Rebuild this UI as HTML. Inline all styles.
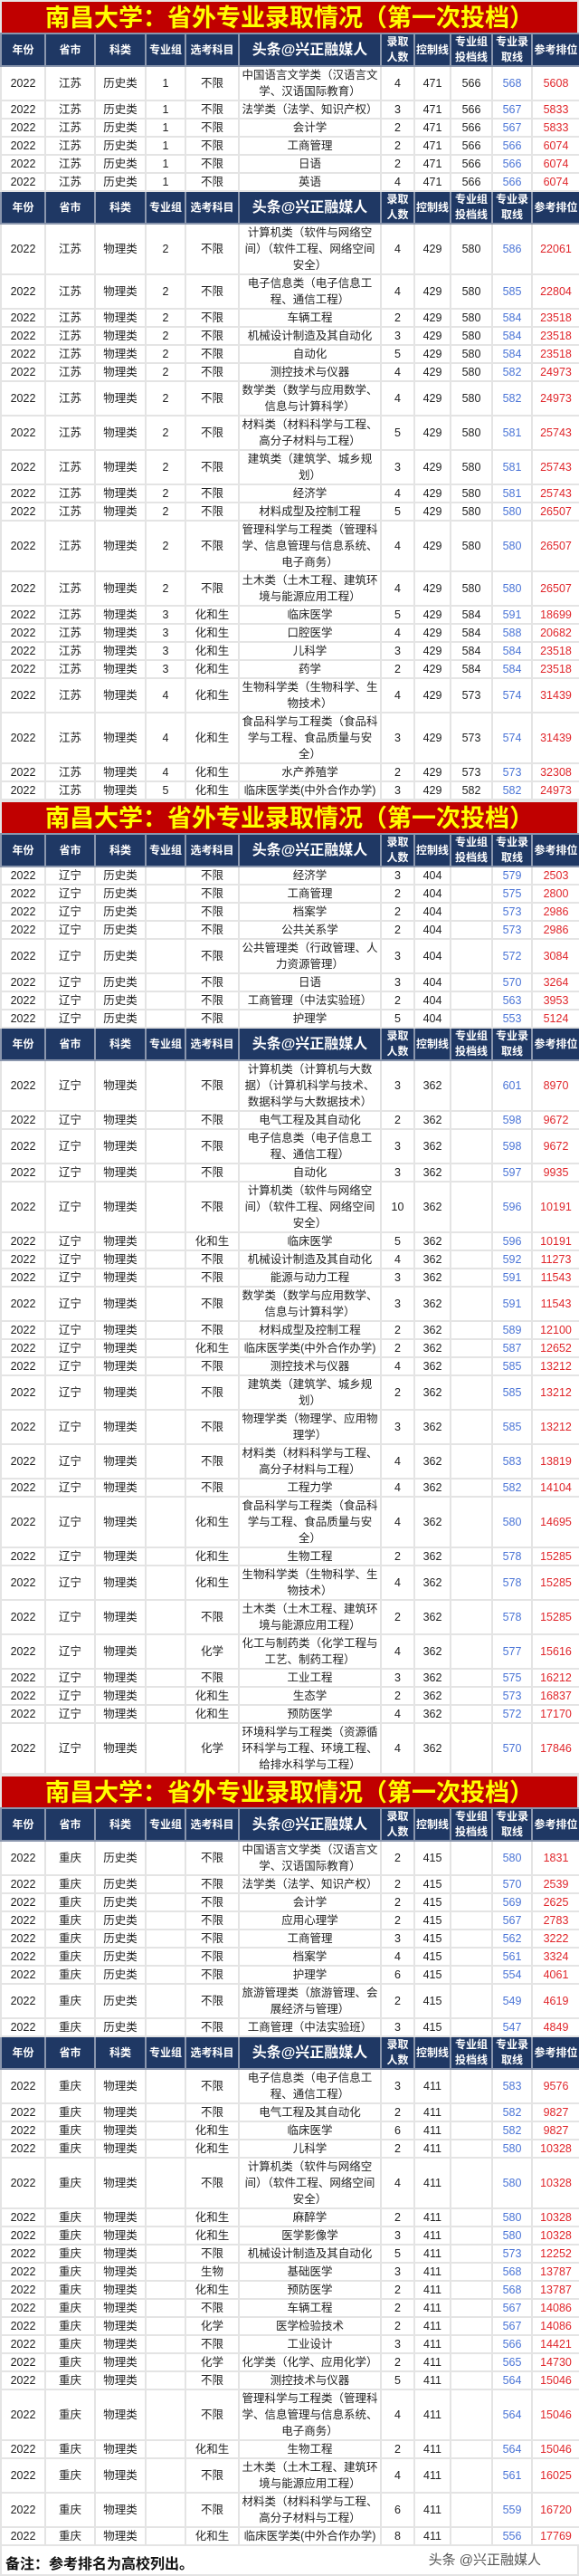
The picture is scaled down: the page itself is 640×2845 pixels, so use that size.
<!DOCTYPE html>
<html><head><meta charset="utf-8">
<style>
*{margin:0;padding:0;box-sizing:border-box}
body{width:640px;height:2811px;background:#fff;font-family:"Liberation Sans","Noto Sans CJK SC",sans-serif;color:#222;overflow:hidden}
.title{height:36px;background:#c00000;color:#ffff00;font-weight:bold;font-size:27px;line-height:36px;text-align:center;border:2px solid #e6e6e6;border-bottom:none;letter-spacing:0px}
table{width:640px;border-collapse:collapse;table-layout:fixed}
td{border:2px solid #e4e4e4;text-align:center;vertical-align:middle;font-size:12.5px;line-height:18px;padding:0 1px;overflow:hidden;white-space:normal}
tr.h td{background:#1f3864;color:#fff;font-weight:bold;font-size:12px;line-height:17px;border:2px solid #8a96ad;height:35px}
tr.h td.w{font-size:16px}
tr.a td{height:19.7px}
tr.b td{height:37.3px}
tr.c td{height:55px}
td.n{color:#4a74d6}
td.r{color:#e0262b}
td.k{font-size:12.5px}
.foot{height:33px;position:relative;border:2px solid #e4e4e4;border-top:none}
.foot .l{position:absolute;left:4px;top:6px;font-weight:bold;font-size:16px;color:#111}
.foot .m{position:absolute;right:40px;top:4px;font-size:15px;color:#555}
</style></head><body>

<div class="title">南昌大学：省外专业录取情况（第一次投档）</div>
<table>
<colgroup><col style="width:49px"><col style="width:55px"><col style="width:56px"><col style="width:44px"><col style="width:59px"><col style="width:157px"><col style="width:37px"><col style="width:40px"><col style="width:46px"><col style="width:44px"><col style="width:53px"></colgroup>
<tr class="h"><td>年份</td><td>省市</td><td>科类</td><td>专业组</td><td>选考科目</td><td class="w">头条@兴正融媒人</td><td>录取人数</td><td>控制线</td><td>专业组投档线</td><td>专业录取线</td><td>参考排位</td></tr>
<tr class="b"><td>2022</td><td>江苏</td><td>历史类</td><td>1</td><td>不限</td><td>中国语言文学类（汉语言文学、汉语国际教育）</td><td>4</td><td>471</td><td>566</td><td class="n">568</td><td class="r">5608</td></tr>
<tr class="a"><td>2022</td><td>江苏</td><td>历史类</td><td>1</td><td>不限</td><td>法学类（法学、知识产权）</td><td>3</td><td>471</td><td>566</td><td class="n">567</td><td class="r">5833</td></tr>
<tr class="a"><td>2022</td><td>江苏</td><td>历史类</td><td>1</td><td>不限</td><td>会计学</td><td>2</td><td>471</td><td>566</td><td class="n">567</td><td class="r">5833</td></tr>
<tr class="a"><td>2022</td><td>江苏</td><td>历史类</td><td>1</td><td>不限</td><td>工商管理</td><td>2</td><td>471</td><td>566</td><td class="n">566</td><td class="r">6074</td></tr>
<tr class="a"><td>2022</td><td>江苏</td><td>历史类</td><td>1</td><td>不限</td><td>日语</td><td>2</td><td>471</td><td>566</td><td class="n">566</td><td class="r">6074</td></tr>
<tr class="a"><td>2022</td><td>江苏</td><td>历史类</td><td>1</td><td>不限</td><td>英语</td><td>4</td><td>471</td><td>566</td><td class="n">566</td><td class="r">6074</td></tr>
<tr class="h"><td>年份</td><td>省市</td><td>科类</td><td>专业组</td><td>选考科目</td><td class="w">头条@兴正融媒人</td><td>录取人数</td><td>控制线</td><td>专业组投档线</td><td>专业录取线</td><td>参考排位</td></tr>
<tr class="c"><td>2022</td><td>江苏</td><td>物理类</td><td>2</td><td>不限</td><td>计算机类（软件与网络空间）（软件工程、网络空间安全）</td><td>4</td><td>429</td><td>580</td><td class="n">586</td><td class="r">22061</td></tr>
<tr class="b"><td>2022</td><td>江苏</td><td>物理类</td><td>2</td><td>不限</td><td>电子信息类（电子信息工程、通信工程）</td><td>4</td><td>429</td><td>580</td><td class="n">585</td><td class="r">22804</td></tr>
<tr class="a"><td>2022</td><td>江苏</td><td>物理类</td><td>2</td><td>不限</td><td>车辆工程</td><td>2</td><td>429</td><td>580</td><td class="n">584</td><td class="r">23518</td></tr>
<tr class="a"><td>2022</td><td>江苏</td><td>物理类</td><td>2</td><td>不限</td><td>机械设计制造及其自动化</td><td>3</td><td>429</td><td>580</td><td class="n">584</td><td class="r">23518</td></tr>
<tr class="a"><td>2022</td><td>江苏</td><td>物理类</td><td>2</td><td>不限</td><td>自动化</td><td>5</td><td>429</td><td>580</td><td class="n">584</td><td class="r">23518</td></tr>
<tr class="a"><td>2022</td><td>江苏</td><td>物理类</td><td>2</td><td>不限</td><td>测控技术与仪器</td><td>4</td><td>429</td><td>580</td><td class="n">582</td><td class="r">24973</td></tr>
<tr class="b"><td>2022</td><td>江苏</td><td>物理类</td><td>2</td><td>不限</td><td>数学类（数学与应用数学、信息与计算科学）</td><td>4</td><td>429</td><td>580</td><td class="n">582</td><td class="r">24973</td></tr>
<tr class="b"><td>2022</td><td>江苏</td><td>物理类</td><td>2</td><td>不限</td><td>材料类（材料科学与工程、高分子材料与工程）</td><td>5</td><td>429</td><td>580</td><td class="n">581</td><td class="r">25743</td></tr>
<tr class="b"><td>2022</td><td>江苏</td><td>物理类</td><td>2</td><td>不限</td><td>建筑类（建筑学、城乡规划）</td><td>3</td><td>429</td><td>580</td><td class="n">581</td><td class="r">25743</td></tr>
<tr class="a"><td>2022</td><td>江苏</td><td>物理类</td><td>2</td><td>不限</td><td>经济学</td><td>4</td><td>429</td><td>580</td><td class="n">581</td><td class="r">25743</td></tr>
<tr class="a"><td>2022</td><td>江苏</td><td>物理类</td><td>2</td><td>不限</td><td>材料成型及控制工程</td><td>5</td><td>429</td><td>580</td><td class="n">580</td><td class="r">26507</td></tr>
<tr class="c"><td>2022</td><td>江苏</td><td>物理类</td><td>2</td><td>不限</td><td>管理科学与工程类（管理科学、信息管理与信息系统、电子商务）</td><td>4</td><td>429</td><td>580</td><td class="n">580</td><td class="r">26507</td></tr>
<tr class="b"><td>2022</td><td>江苏</td><td>物理类</td><td>2</td><td>不限</td><td>土木类（土木工程、建筑环境与能源应用工程）</td><td>4</td><td>429</td><td>580</td><td class="n">580</td><td class="r">26507</td></tr>
<tr class="a"><td>2022</td><td>江苏</td><td>物理类</td><td>3</td><td>化和生</td><td>临床医学</td><td>5</td><td>429</td><td>584</td><td class="n">591</td><td class="r">18699</td></tr>
<tr class="a"><td>2022</td><td>江苏</td><td>物理类</td><td>3</td><td>化和生</td><td>口腔医学</td><td>4</td><td>429</td><td>584</td><td class="n">588</td><td class="r">20682</td></tr>
<tr class="a"><td>2022</td><td>江苏</td><td>物理类</td><td>3</td><td>化和生</td><td>儿科学</td><td>3</td><td>429</td><td>584</td><td class="n">584</td><td class="r">23518</td></tr>
<tr class="a"><td>2022</td><td>江苏</td><td>物理类</td><td>3</td><td>化和生</td><td>药学</td><td>2</td><td>429</td><td>584</td><td class="n">584</td><td class="r">23518</td></tr>
<tr class="b"><td>2022</td><td>江苏</td><td>物理类</td><td>4</td><td>化和生</td><td>生物科学类（生物科学、生物技术）</td><td>4</td><td>429</td><td>573</td><td class="n">574</td><td class="r">31439</td></tr>
<tr class="c"><td>2022</td><td>江苏</td><td>物理类</td><td>4</td><td>化和生</td><td>食品科学与工程类（食品科学与工程、食品质量与安全）</td><td>3</td><td>429</td><td>573</td><td class="n">574</td><td class="r">31439</td></tr>
<tr class="a"><td>2022</td><td>江苏</td><td>物理类</td><td>4</td><td>化和生</td><td>水产养殖学</td><td>2</td><td>429</td><td>573</td><td class="n">573</td><td class="r">32308</td></tr>
<tr class="a"><td>2022</td><td>江苏</td><td>物理类</td><td>5</td><td>化和生</td><td>临床医学类(中外合作办学)</td><td>3</td><td>429</td><td>582</td><td class="n">582</td><td class="r">24973</td></tr>
</table>

<div class="title">南昌大学：省外专业录取情况（第一次投档）</div>
<table>
<colgroup><col style="width:49px"><col style="width:55px"><col style="width:56px"><col style="width:44px"><col style="width:59px"><col style="width:157px"><col style="width:37px"><col style="width:40px"><col style="width:46px"><col style="width:44px"><col style="width:53px"></colgroup>
<tr class="h"><td>年份</td><td>省市</td><td>科类</td><td>专业组</td><td>选考科目</td><td class="w">头条@兴正融媒人</td><td>录取人数</td><td>控制线</td><td>专业组投档线</td><td>专业录取线</td><td>参考排位</td></tr>
<tr class="a"><td>2022</td><td>辽宁</td><td>历史类</td><td></td><td>不限</td><td>经济学</td><td>3</td><td>404</td><td></td><td class="n">579</td><td class="r">2503</td></tr>
<tr class="a"><td>2022</td><td>辽宁</td><td>历史类</td><td></td><td>不限</td><td>工商管理</td><td>2</td><td>404</td><td></td><td class="n">575</td><td class="r">2800</td></tr>
<tr class="a"><td>2022</td><td>辽宁</td><td>历史类</td><td></td><td>不限</td><td>档案学</td><td>2</td><td>404</td><td></td><td class="n">573</td><td class="r">2986</td></tr>
<tr class="a"><td>2022</td><td>辽宁</td><td>历史类</td><td></td><td>不限</td><td>公共关系学</td><td>2</td><td>404</td><td></td><td class="n">573</td><td class="r">2986</td></tr>
<tr class="b"><td>2022</td><td>辽宁</td><td>历史类</td><td></td><td>不限</td><td>公共管理类（行政管理、人力资源管理）</td><td>3</td><td>404</td><td></td><td class="n">572</td><td class="r">3084</td></tr>
<tr class="a"><td>2022</td><td>辽宁</td><td>历史类</td><td></td><td>不限</td><td>日语</td><td>3</td><td>404</td><td></td><td class="n">570</td><td class="r">3264</td></tr>
<tr class="a"><td>2022</td><td>辽宁</td><td>历史类</td><td></td><td>不限</td><td>工商管理（中法实验班）</td><td>2</td><td>404</td><td></td><td class="n">563</td><td class="r">3953</td></tr>
<tr class="a"><td>2022</td><td>辽宁</td><td>历史类</td><td></td><td>不限</td><td>护理学</td><td>5</td><td>404</td><td></td><td class="n">553</td><td class="r">5124</td></tr>
<tr class="h"><td>年份</td><td>省市</td><td>科类</td><td>专业组</td><td>选考科目</td><td class="w">头条@兴正融媒人</td><td>录取人数</td><td>控制线</td><td>专业组投档线</td><td>专业录取线</td><td>参考排位</td></tr>
<tr class="c"><td>2022</td><td>辽宁</td><td>物理类</td><td></td><td>不限</td><td>计算机类（计算机与大数据）（计算机科学与技术、数据科学与大数据技术）</td><td>3</td><td>362</td><td></td><td class="n">601</td><td class="r">8970</td></tr>
<tr class="a"><td>2022</td><td>辽宁</td><td>物理类</td><td></td><td>不限</td><td>电气工程及其自动化</td><td>2</td><td>362</td><td></td><td class="n">598</td><td class="r">9672</td></tr>
<tr class="b"><td>2022</td><td>辽宁</td><td>物理类</td><td></td><td>不限</td><td>电子信息类（电子信息工程、通信工程）</td><td>3</td><td>362</td><td></td><td class="n">598</td><td class="r">9672</td></tr>
<tr class="a"><td>2022</td><td>辽宁</td><td>物理类</td><td></td><td>不限</td><td>自动化</td><td>3</td><td>362</td><td></td><td class="n">597</td><td class="r">9935</td></tr>
<tr class="c"><td>2022</td><td>辽宁</td><td>物理类</td><td></td><td>不限</td><td>计算机类（软件与网络空间）（软件工程、网络空间安全）</td><td>10</td><td>362</td><td></td><td class="n">596</td><td class="r">10191</td></tr>
<tr class="a"><td>2022</td><td>辽宁</td><td>物理类</td><td></td><td>化和生</td><td>临床医学</td><td>5</td><td>362</td><td></td><td class="n">596</td><td class="r">10191</td></tr>
<tr class="a"><td>2022</td><td>辽宁</td><td>物理类</td><td></td><td>不限</td><td>机械设计制造及其自动化</td><td>4</td><td>362</td><td></td><td class="n">592</td><td class="r">11273</td></tr>
<tr class="a"><td>2022</td><td>辽宁</td><td>物理类</td><td></td><td>不限</td><td>能源与动力工程</td><td>3</td><td>362</td><td></td><td class="n">591</td><td class="r">11543</td></tr>
<tr class="b"><td>2022</td><td>辽宁</td><td>物理类</td><td></td><td>不限</td><td>数学类（数学与应用数学、信息与计算科学）</td><td>3</td><td>362</td><td></td><td class="n">591</td><td class="r">11543</td></tr>
<tr class="a"><td>2022</td><td>辽宁</td><td>物理类</td><td></td><td>不限</td><td>材料成型及控制工程</td><td>2</td><td>362</td><td></td><td class="n">589</td><td class="r">12100</td></tr>
<tr class="a"><td>2022</td><td>辽宁</td><td>物理类</td><td></td><td>化和生</td><td>临床医学类(中外合作办学)</td><td>2</td><td>362</td><td></td><td class="n">587</td><td class="r">12652</td></tr>
<tr class="a"><td>2022</td><td>辽宁</td><td>物理类</td><td></td><td>不限</td><td>测控技术与仪器</td><td>4</td><td>362</td><td></td><td class="n">585</td><td class="r">13212</td></tr>
<tr class="b"><td>2022</td><td>辽宁</td><td>物理类</td><td></td><td>不限</td><td>建筑类（建筑学、城乡规划）</td><td>2</td><td>362</td><td></td><td class="n">585</td><td class="r">13212</td></tr>
<tr class="b"><td>2022</td><td>辽宁</td><td>物理类</td><td></td><td>不限</td><td>物理学类（物理学、应用物理学）</td><td>3</td><td>362</td><td></td><td class="n">585</td><td class="r">13212</td></tr>
<tr class="b"><td>2022</td><td>辽宁</td><td>物理类</td><td></td><td>不限</td><td>材料类（材料科学与工程、高分子材料与工程）</td><td>4</td><td>362</td><td></td><td class="n">583</td><td class="r">13819</td></tr>
<tr class="a"><td>2022</td><td>辽宁</td><td>物理类</td><td></td><td>不限</td><td>工程力学</td><td>4</td><td>362</td><td></td><td class="n">582</td><td class="r">14104</td></tr>
<tr class="c"><td>2022</td><td>辽宁</td><td>物理类</td><td></td><td>化和生</td><td>食品科学与工程类（食品科学与工程、食品质量与安全）</td><td>4</td><td>362</td><td></td><td class="n">580</td><td class="r">14695</td></tr>
<tr class="a"><td>2022</td><td>辽宁</td><td>物理类</td><td></td><td>化和生</td><td>生物工程</td><td>2</td><td>362</td><td></td><td class="n">578</td><td class="r">15285</td></tr>
<tr class="b"><td>2022</td><td>辽宁</td><td>物理类</td><td></td><td>化和生</td><td>生物科学类（生物科学、生物技术）</td><td>4</td><td>362</td><td></td><td class="n">578</td><td class="r">15285</td></tr>
<tr class="b"><td>2022</td><td>辽宁</td><td>物理类</td><td></td><td>不限</td><td>土木类（土木工程、建筑环境与能源应用工程）</td><td>2</td><td>362</td><td></td><td class="n">578</td><td class="r">15285</td></tr>
<tr class="b"><td>2022</td><td>辽宁</td><td>物理类</td><td></td><td>化学</td><td>化工与制药类（化学工程与工艺、制药工程）</td><td>4</td><td>362</td><td></td><td class="n">577</td><td class="r">15616</td></tr>
<tr class="a"><td>2022</td><td>辽宁</td><td>物理类</td><td></td><td>不限</td><td>工业工程</td><td>3</td><td>362</td><td></td><td class="n">575</td><td class="r">16212</td></tr>
<tr class="a"><td>2022</td><td>辽宁</td><td>物理类</td><td></td><td>化和生</td><td>生态学</td><td>2</td><td>362</td><td></td><td class="n">573</td><td class="r">16837</td></tr>
<tr class="a"><td>2022</td><td>辽宁</td><td>物理类</td><td></td><td>化和生</td><td>预防医学</td><td>4</td><td>362</td><td></td><td class="n">572</td><td class="r">17170</td></tr>
<tr class="c"><td>2022</td><td>辽宁</td><td>物理类</td><td></td><td>化学</td><td>环境科学与工程类（资源循环科学与工程、环境工程、给排水科学与工程）</td><td>4</td><td>362</td><td></td><td class="n">570</td><td class="r">17846</td></tr>
</table>

<div class="title">南昌大学：省外专业录取情况（第一次投档）</div>
<table>
<colgroup><col style="width:49px"><col style="width:55px"><col style="width:56px"><col style="width:44px"><col style="width:59px"><col style="width:157px"><col style="width:37px"><col style="width:40px"><col style="width:46px"><col style="width:44px"><col style="width:53px"></colgroup>
<tr class="h"><td>年份</td><td>省市</td><td>科类</td><td>专业组</td><td>选考科目</td><td class="w">头条@兴正融媒人</td><td>录取人数</td><td>控制线</td><td>专业组投档线</td><td>专业录取线</td><td>参考排位</td></tr>
<tr class="b"><td>2022</td><td>重庆</td><td>历史类</td><td></td><td>不限</td><td>中国语言文学类（汉语言文学、汉语国际教育）</td><td>2</td><td>415</td><td></td><td class="n">580</td><td class="r">1831</td></tr>
<tr class="a"><td>2022</td><td>重庆</td><td>历史类</td><td></td><td>不限</td><td>法学类（法学、知识产权）</td><td>2</td><td>415</td><td></td><td class="n">570</td><td class="r">2539</td></tr>
<tr class="a"><td>2022</td><td>重庆</td><td>历史类</td><td></td><td>不限</td><td>会计学</td><td>2</td><td>415</td><td></td><td class="n">569</td><td class="r">2625</td></tr>
<tr class="a"><td>2022</td><td>重庆</td><td>历史类</td><td></td><td>不限</td><td>应用心理学</td><td>2</td><td>415</td><td></td><td class="n">567</td><td class="r">2783</td></tr>
<tr class="a"><td>2022</td><td>重庆</td><td>历史类</td><td></td><td>不限</td><td>工商管理</td><td>3</td><td>415</td><td></td><td class="n">562</td><td class="r">3222</td></tr>
<tr class="a"><td>2022</td><td>重庆</td><td>历史类</td><td></td><td>不限</td><td>档案学</td><td>4</td><td>415</td><td></td><td class="n">561</td><td class="r">3324</td></tr>
<tr class="a"><td>2022</td><td>重庆</td><td>历史类</td><td></td><td>不限</td><td>护理学</td><td>6</td><td>415</td><td></td><td class="n">554</td><td class="r">4061</td></tr>
<tr class="b"><td>2022</td><td>重庆</td><td>历史类</td><td></td><td>不限</td><td>旅游管理类（旅游管理、会展经济与管理）</td><td>2</td><td>415</td><td></td><td class="n">549</td><td class="r">4619</td></tr>
<tr class="a"><td>2022</td><td>重庆</td><td>历史类</td><td></td><td>不限</td><td>工商管理（中法实验班）</td><td>3</td><td>415</td><td></td><td class="n">547</td><td class="r">4849</td></tr>
<tr class="h"><td>年份</td><td>省市</td><td>科类</td><td>专业组</td><td>选考科目</td><td class="w">头条@兴正融媒人</td><td>录取人数</td><td>控制线</td><td>专业组投档线</td><td>专业录取线</td><td>参考排位</td></tr>
<tr class="b"><td>2022</td><td>重庆</td><td>物理类</td><td></td><td>不限</td><td>电子信息类（电子信息工程、通信工程）</td><td>3</td><td>411</td><td></td><td class="n">583</td><td class="r">9576</td></tr>
<tr class="a"><td>2022</td><td>重庆</td><td>物理类</td><td></td><td>不限</td><td>电气工程及其自动化</td><td>2</td><td>411</td><td></td><td class="n">582</td><td class="r">9827</td></tr>
<tr class="a"><td>2022</td><td>重庆</td><td>物理类</td><td></td><td>化和生</td><td>临床医学</td><td>6</td><td>411</td><td></td><td class="n">582</td><td class="r">9827</td></tr>
<tr class="a"><td>2022</td><td>重庆</td><td>物理类</td><td></td><td>化和生</td><td>儿科学</td><td>2</td><td>411</td><td></td><td class="n">580</td><td class="r">10328</td></tr>
<tr class="c"><td>2022</td><td>重庆</td><td>物理类</td><td></td><td>不限</td><td>计算机类（软件与网络空间）（软件工程、网络空间安全）</td><td>4</td><td>411</td><td></td><td class="n">580</td><td class="r">10328</td></tr>
<tr class="a"><td>2022</td><td>重庆</td><td>物理类</td><td></td><td>化和生</td><td>麻醉学</td><td>2</td><td>411</td><td></td><td class="n">580</td><td class="r">10328</td></tr>
<tr class="a"><td>2022</td><td>重庆</td><td>物理类</td><td></td><td>化和生</td><td>医学影像学</td><td>3</td><td>411</td><td></td><td class="n">580</td><td class="r">10328</td></tr>
<tr class="a"><td>2022</td><td>重庆</td><td>物理类</td><td></td><td>不限</td><td>机械设计制造及其自动化</td><td>5</td><td>411</td><td></td><td class="n">573</td><td class="r">12252</td></tr>
<tr class="a"><td>2022</td><td>重庆</td><td>物理类</td><td></td><td>生物</td><td>基础医学</td><td>3</td><td>411</td><td></td><td class="n">568</td><td class="r">13787</td></tr>
<tr class="a"><td>2022</td><td>重庆</td><td>物理类</td><td></td><td>化和生</td><td>预防医学</td><td>2</td><td>411</td><td></td><td class="n">568</td><td class="r">13787</td></tr>
<tr class="a"><td>2022</td><td>重庆</td><td>物理类</td><td></td><td>不限</td><td>车辆工程</td><td>2</td><td>411</td><td></td><td class="n">567</td><td class="r">14086</td></tr>
<tr class="a"><td>2022</td><td>重庆</td><td>物理类</td><td></td><td>化学</td><td>医学检验技术</td><td>2</td><td>411</td><td></td><td class="n">567</td><td class="r">14086</td></tr>
<tr class="a"><td>2022</td><td>重庆</td><td>物理类</td><td></td><td>不限</td><td>工业设计</td><td>3</td><td>411</td><td></td><td class="n">566</td><td class="r">14421</td></tr>
<tr class="a"><td>2022</td><td>重庆</td><td>物理类</td><td></td><td>化学</td><td>化学类（化学、应用化学）</td><td>2</td><td>411</td><td></td><td class="n">565</td><td class="r">14730</td></tr>
<tr class="a"><td>2022</td><td>重庆</td><td>物理类</td><td></td><td>不限</td><td>测控技术与仪器</td><td>5</td><td>411</td><td></td><td class="n">564</td><td class="r">15046</td></tr>
<tr class="c"><td>2022</td><td>重庆</td><td>物理类</td><td></td><td>不限</td><td>管理科学与工程类（管理科学、信息管理与信息系统、电子商务）</td><td>4</td><td>411</td><td></td><td class="n">564</td><td class="r">15046</td></tr>
<tr class="a"><td>2022</td><td>重庆</td><td>物理类</td><td></td><td>化和生</td><td>生物工程</td><td>2</td><td>411</td><td></td><td class="n">564</td><td class="r">15046</td></tr>
<tr class="b"><td>2022</td><td>重庆</td><td>物理类</td><td></td><td>不限</td><td>土木类（土木工程、建筑环境与能源应用工程）</td><td>4</td><td>411</td><td></td><td class="n">561</td><td class="r">16025</td></tr>
<tr class="b"><td>2022</td><td>重庆</td><td>物理类</td><td></td><td>不限</td><td>材料类（材料科学与工程、高分子材料与工程）</td><td>6</td><td>411</td><td></td><td class="n">559</td><td class="r">16720</td></tr>
<tr class="a"><td>2022</td><td>重庆</td><td>物理类</td><td></td><td>化和生</td><td>临床医学类(中外合作办学)</td><td>8</td><td>411</td><td></td><td class="n">556</td><td class="r">17769</td></tr>
</table>
<div class="foot"><span class="l">备注：参考排名为高校列出。</span><span class="m">头条 @兴正融媒人</span></div>
</body></html>
